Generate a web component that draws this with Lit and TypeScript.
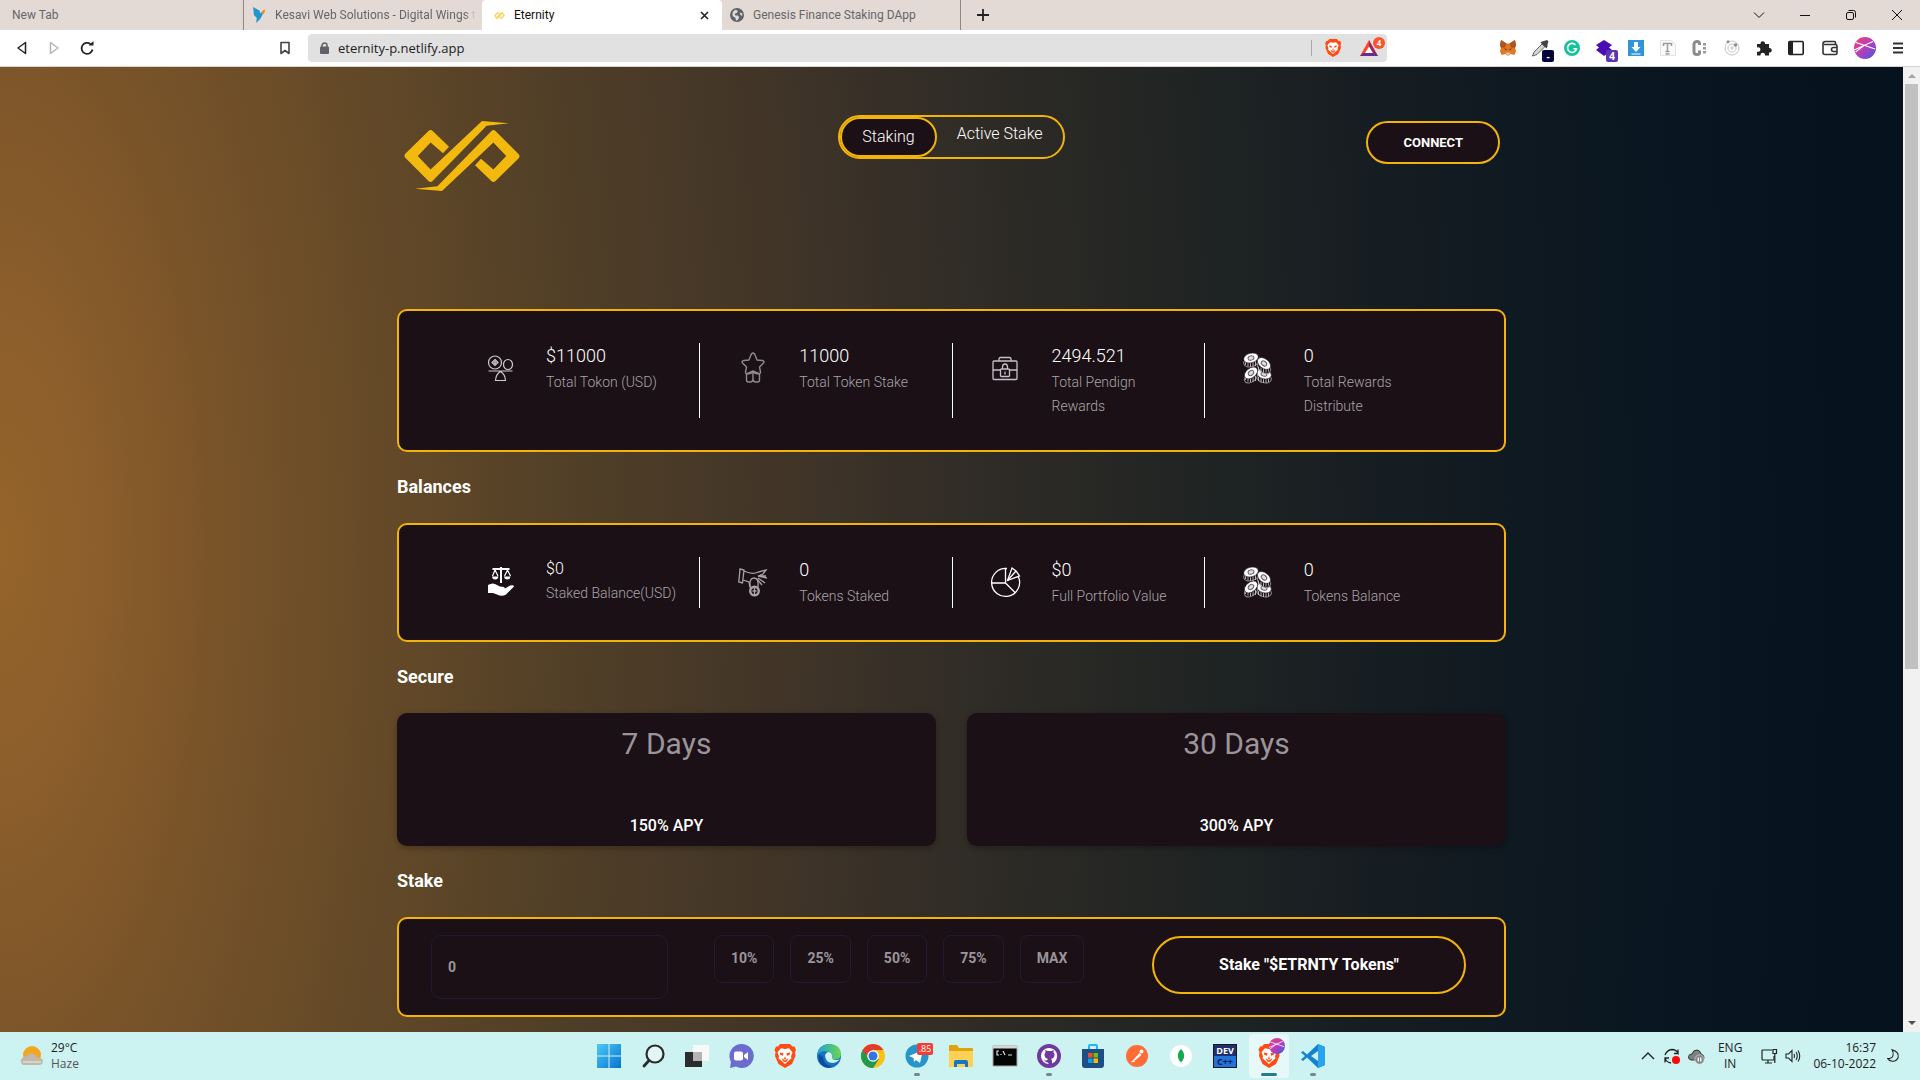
import { LitElement, html, svg, css } from "lit";
import { customElement, property } from "lit/decorators.js";

const brave = svg`
  <path d="M7 0h10l2.500 2.500h2l1.500 3.500-1 2 .5 4-3.500 8L12 24l-6.500-4L2 12l.5-4-1-2L3 2.500h2z" fill="#ff4b14"/>
  <path d="M12 5l4-.8 3.500 4-1.500 4 .5 2-4 3.500L12 20l-2.500-2.300-4-3.500.5-2-1.500-4L8 4.200z" fill="#fff"/>
  <path d="M7 8.500l3.500.8-.5 2.500-2.800-1zM17 8.500l-3.500.8.5 2.500 2.800-1zM12 12l1 3-1 .6-1-.6zM8.500 14l3.500 2.500 3.500-2.500-1.500 3.200-2 1-2-1z" fill="#ff4b14"/>`;

const coin = (x: number, y: number, r: number) => svg`
  <g transform="translate(${x} ${y})">
    <ellipse cx="0" cy="4" rx="7.500" ry="4.800" transform="rotate(${r} 0 4)" fill="#1a1015" stroke="#8d888d" stroke-width="1"/>
    <path d="M-5.500 3v4M-3 4v4.500M-.5 4v5M2 4v5M4.500 3v5" stroke="#c9c5c9" stroke-width=".9"/>
    <ellipse cx="0" cy="0" rx="7.500" ry="4.800" transform="rotate(${r})" fill="#fff" stroke="#1a1015" stroke-width=".6"/>
    <ellipse cx="0" cy="0" rx="3" ry="2.200" transform="rotate(${r})" fill="#ddd" stroke="#6a6268" stroke-width="1"/>
  </g>`;

const wing = "M28.500 60Q26.600 62 24.500 60L1.500 37Q-.5 35 1.500 32.500L24.500 10Q26.600 8 28.700 10L45 25.700 39 32.300 26.600 21.500 13.800 35 26.600 48.500 78 0 105 2.300 82.600 4.700Z";

const icons: Record<string, unknown> = {
  logo: svg`<g fill="#f3b90e"><path d=${wing}/><path transform="rotate(180 58 35)" d=${wing}/></g>`,
  bird: svg`<path d="M0 0l9 5 1 4 3-3 3 0-3 4-3 6-6 6 1-7-4-4z" fill="#2196c9"/><path d="M12 6l4-3v4l-3 4z" fill="#f58a2c"/>`,
  infinity: svg`<path d="M1 6l3-3 2 2-3 4zM11 6L8 9 6 7l3-4zM4 9l4-6" fill="none" stroke="#f8d767" stroke-width="1.600"/>`,
  close: svg`<path d="M2 2l7 7M9 2l-7 7" stroke="#222" stroke-width="1.600" fill="none"/>`,
  globe: svg`<circle cx="8" cy="8" r="8" fill="#5f6368"/><path d="M3 4.500l3-2.500 3 1-1 2.500-2.500 1 .5 2 3 0 1.500 2-1.500 3-2 1-1-3.500L3 9zM11 5l3 1v3l-2-1z" fill="#e3dad6"/>`,
  plus: svg`<path d="M6 0v12M0 6h12" stroke="#222" stroke-width="1.800"/>`,
  back: svg`<path d="M9.500 1.500v11L2 7z" fill="none" stroke="#222" stroke-width="1.500" stroke-linejoin="round"/>`,
  forward: svg`<path d="M2.500 1.500v11L10 7z" fill="none" stroke="#b5b5b5" stroke-width="1.500" stroke-linejoin="round"/>`,
  reload: svg`<path d="M12.500 8.500A5.500 5.500 0 1 1 10.500 3" fill="none" stroke="#222" stroke-width="1.800"/><path d="M8.500 4.500h5V0z" fill="#222"/>`,
  bookmark: svg`<path d="M1.500 1.500h8v11L5.500 9.500l-4 3z" fill="none" stroke="#444" stroke-width="1.600" stroke-linejoin="round"/>`,
  lock: svg`<rect x="0" y="4.500" width="9" height="7.500" rx="1" fill="#5f6368"/><path d="M2 5V3.500a2.500 2.500 0 0 1 5 0V5" fill="none" stroke="#5f6368" stroke-width="1.500"/>`,
  brave,
  bat: svg`<path d="M9 0L0 16h4.500L9 8z" fill="#ff4724"/><path d="M9 0l9 16h-4.500L9 8z" fill="#9e1f63"/><path d="M0 16h18l-3.500-3H3z" fill="#662d91"/><path d="M9 6.500L5 13h8z" fill="#fff"/>`,
  fox: svg`<path d="M1 0l5.500 3.500h3L15 0l1 5-1 3 1 3-1.500 4-4-1L9 15.500H7L5.500 14l-4 1L0 11l1-3-1-3z" fill="#e4761b"/><path d="M1 0l5.500 3.500L5 7.500 1 8 0 5zM15 0L9.500 3.500 11 7.500l4 .5 1-3z" fill="#a85522"/><path d="M4 8.500l2.500.5v1.500zM12 8.500L9.500 9v1.500z" fill="#233447"/><path d="M5.500 12.500h5L9 15.500H7z" fill="#d7c1b3"/>`,
  dropper: svg`<path d="M10 4L2 12l-1.500 4L5 14.500 13 6.500z" fill="#d5d5d5" stroke="#666" stroke-width="1"/><path d="M8.500 2.500l6 6 1-2 0-2 1-3-1.500-1.500-3 1-2 .5z" fill="#444"/>`,
  grammarly: svg`<circle cx="8" cy="8" r="8" fill="#15c39a"/><path d="M11.500 5A4.500 4.500 0 1 0 12.500 8.700H9.500" fill="none" stroke="#fff" stroke-width="1.600"/>`,
  gem: svg`<path d="M8 0l8 5-3 2.500L16 10l-8 6-8-6 3-2.500L0 5z" fill="#4a0db5"/>`,
  download: svg`<path d="M0 0h16v16H0z" fill="#2f96dd"/><path d="M6 2h4v5h2.500L8 12 3.500 7H6zM3.500 13.500h9v1h-9z" fill="#fff"/>`,
  tee: svg`<path d="M.5.5h11l4 4v11H.5z" fill="#fafafa" stroke="#e3e3e3"/><path d="M3.500 6V3.500h8V6M7.500 3.500v8M5.500 11.500h4M5.500 14h4" fill="none" stroke="#9c9c9c" stroke-width="1.500"/>`,
  cdots: svg`<path d="M7.500 5V3.500Q7.500 1.500 5 1.500T2 4v8q0 2.500 3 2.500T7.500 12v-1.500" fill="none" stroke="#8c8c8c" stroke-width="3"/><path d="M11 3h3v2.500h-3zM11 7h3v2.500h-3zM11 11h3v2.500h-3z" fill="#9a9a9a"/>`,
  orbit: svg`<circle cx="8" cy="8" r="7" fill="none" stroke="#c4c4c4"/><circle cx="8" cy="8" r="4" fill="none" stroke="#dadada" stroke-width="1.500"/><circle cx="8" cy="8" r="1.800" fill="#d2d2d2"/><circle cx="4" cy="1.800" r="1.500" fill="#8f8f8f"/><circle cx="11.500" cy="5" r="1.800" fill="#8f8f8f"/>`,
  puzzle: svg`<path d="M1 4h3.500a2.300 2.300 0 1 1 4.500 0H13v4a2.300 2.300 0 1 1 0 4.500V15.500H9a2.300 2.300 0 1 0-4.500 0H1v-4a2.300 2.300 0 1 0 0-4z" fill="#222"/>`,
  sidebar: svg`<rect x=".8" y="1.500" width="14.400" height="13" rx="1" fill="none" stroke="#222" stroke-width="1.600"/><path d="M1 2h4v12H1z" fill="#222"/>`,
  wallet: svg`<path d="M13.500 4V2.500q0-1-1-1h-9Q1 1.500 1 4v8.500q0 2 2 2h10.500q1.500 0 1.500-1.500V6q0-1.500-1.500-1.500H2" fill="none" stroke="#333" stroke-width="1.600"/><path d="M15 7.500h-3.500a2 2 0 0 0 0 4H15" fill="none" stroke="#333" stroke-width="1.600"/>`,
  avatar: svg`<defs><linearGradient id="av" x1="0" y1="0" x2="1" y2="1"><stop offset="0" stop-color="#f0446c"/><stop offset=".5" stop-color="#b93cbd"/><stop offset="1" stop-color="#3d5be0"/></linearGradient></defs><circle cx="11" cy="11" r="11" fill="url(#av)"/><path d="M2 5.500L21 12M0 13L19 4.500M1.500 15L10 8.500" stroke="#fff" stroke-width="1.100" fill="none"/>`,
  menu: svg`<path d="M0 1.500h10M0 6h10M0 10.500h10" stroke="#333" stroke-width="1.800"/>`,
  chevron: svg`<path d="M1 3.500l5 5 5-5" fill="none" stroke="#111"/>`,
  minimise: svg`<path d="M1 6.500h10" stroke="#111"/>`,
  restore: svg`<rect x="1.500" y="3.500" width="7" height="7" rx="1.500" fill="none" stroke="#111"/><path d="M3.500 1.500h5q2 0 2 2v5" fill="none" stroke="#111"/>`,
  exit: svg`<path d="M1 1l10 10M11 1L1 11" stroke="#111"/>`,

  balance: svg`<g fill="none" stroke="#cfcad0" stroke-width="1.200" transform="translate(0 -1)"><circle cx="10" cy="10.500" r="6.500"/><path d="M10 7.500l3 3-3 3-3-3z"/><circle cx="10" cy="10.500" r="1"/><ellipse cx="23" cy="12.500" rx="4.500" ry="5"/><path d="M3.500 19h24M15.500 19.500q-4.500 2.500-5 9h10q-.5-6.500-5-9z"/></g>`,
  medal: svg`<g fill="none" stroke="#8f898f" stroke-width="1.400" stroke-linejoin="round"><path d="M15 0q1.500 0 2.500 3l1.500 4 5 .5q3 .5 1.500 2.500l-4 4 1 5q0 2-2 1.500L15 18l-5.500 2.500q-2 .5-2-1.500l1-5-4-4Q3 8 6 7.500L11 7l1.500-4Q13.500 0 15 0z"/><path d="M8.500 20v7q0 2 2 2h2q2 0 2.500-2.500.5 2.500 2.500 2.500h2q2 0 2-2v-7M15 18.500v9M8.500 20.500q4 1 6.500-2 2.500 3 6.500 2"/></g>`,
  briefcase: svg`<g fill="none" stroke="#c6c1c7" stroke-width="1.300" transform="translate(0 -1)"><rect x="3" y="9" width="24" height="18.500" rx="1"/><path d="M9 9V7q0-1.500 1.500-1.500h9q1.500 0 1.500 1.500v2M3 18h7M20 18h7"/><rect x="10.500" y="17" width="9" height="7.500" rx="1"/><path d="M12.500 17v-2a2.500 3 0 0 1 5 0v2M15 19.500v3"/></g>`,
  coins: svg`${coin(22, 21, 15)}${coin(9, 20, -38)}${coin(9, 5, -15)}${coin(22, 10.500, 38)}`,
  scaleHand: svg`<g transform="translate(2 0)"><path d="M14 0v16M5.500 2h17" stroke="#fff" stroke-width="2" fill="none"/><path d="M8 3L5.500 9M8 3l3 6M20.500 3l-3 6M20.500 3l3 6" stroke="#fff" stroke-width="1.200" fill="none"/><path d="M5 9.500h6.500Q11 12.500 8.200 12.500T5 9.500zM17 9.500h6.500q-.5 3-3.300 3T17 9.500z" fill="#fff"/><path d="M1 18q5-3 9 0l3 1.500q5 0 5 2l5-3q4-1 4 1l-8 8q-4 2.500-9 0l-4-1.500-5 0z" fill="#fff"/></g>`,
  handCoin: svg`<g fill="none" stroke="#a8a3a8" stroke-width="1.300" transform="translate(0 -1)"><path d="M2 3l4 1-1.500 13L.8 16zM6 5q9 4 14 1l8-2-3 4-5 2 8 0M20 10l9 2M20 12l7 5M19 13l5 6M5 14l6 2 1 5 3 1"/><path d="M12 21q-1-9 4-9t4 9"/><circle cx="16.500" cy="25" r="4.300" stroke-width="2.400"/><path d="M16.500 22v6M14.500 25h4"/></g>`,
  pie: svg`<g fill="none" stroke="#fff" stroke-width="1.300"><path d="M17 1.500A14 14 0 1 0 28.500 10M15.500 2v14H1.500M15.500 16L25 25.500M17.500 13.500L22 1 26 4 29.500 9z"/><path d="M17.500 13.500L26 4"/></g>`,

  weather: svg`<circle cx="12" cy="11" r="9" fill="#f3a61f"/><path d="M3 21q-4-3-1-7 2-2 4-1.500Q9 8 13 10q4 1 4 4 5-1 6 3 0 4-4 4z" fill="#bfb9ae"/><path d="M3 18h18" stroke="#e5dccb" stroke-width="1.500"/>`,
  windows: svg`<defs><linearGradient id="wn" x1="0" y1="0" x2="1" y2="1"><stop offset="0" stop-color="#4cc9f8"/><stop offset="1" stop-color="#0673cf"/></linearGradient></defs><path d="M0 0h11.500v11.500H0zM12.500 0H24v11.500H12.500zM0 12.500h11.500V24H0zM12.500 12.500H24V24H12.500z" fill="url(#wn)"/>`,
  search: svg`<circle cx="14" cy="10" r="8.500" fill="#e3f6f6" stroke="#2a2a2a" stroke-width="2.200"/><path d="M8 16.500L3 22" stroke="#2a2a2a" stroke-width="2.800" stroke-linecap="round"/>`,
  tasks: svg`<path d="M8 1h16v16H8z" fill="#f7f9f9"/><path d="M0 8h17v15H0z" fill="#2c2c2c"/><path d="M8 8h9v9H8z" fill="#b4b4b4"/>`,
  chat: svg`<path d="M12 0a12 12 0 1 1-5 22.500L1 24l1-6A12 12 0 0 1 12 0z" fill="#6c6bd0"/><rect x="5" y="7.500" width="9" height="9" rx="2" fill="#fff"/><path d="M15 11l4-3v8l-4-3z" fill="#fff"/>`,
  edge: svg`<defs><linearGradient id="eg" x1="0" y1="0" x2="1" y2="0"><stop offset="0" stop-color="#1f9fd8"/><stop offset="1" stop-color="#6bd84c"/></linearGradient></defs><circle cx="12" cy="12" r="12" fill="#1670c4"/><path d="M0 11Q2 0 13 0q11 1 11 10 0 5-6 5.500-4-.5-3-2 1-3-2-5Q5 5 0 11z" fill="url(#eg)"/><path d="M8 11q2-4 5-2.500 3 2 2 5 0 2 4 2.500 3 0 4-1-3 4-8 4-7-1-7-8z" fill="#cdf2f2"/><path d="M6 13q0 8 9 9.500Q11 25 6 22 0 18 2 11q2 0 4 2z" fill="#0c4d9a"/>`,
  chrome: svg`<circle cx="12" cy="12" r="12" fill="#fbc116"/><path d="M1.600 6A12 12 0 0 1 22.400 6H12l-6 8z" fill="#e33b2e"/><path d="M1.600 6A12 12 0 0 0 12 24l6-9-9 1z" fill="#229a4b"/><circle cx="12" cy="12" r="5.800" fill="#fff"/><circle cx="12" cy="12" r="4.500" fill="#2f74e8"/>`,
  telegram: svg`<circle cx="12" cy="12" r="11.500" fill="#2495cd"/><path d="M4 12l14-6-3 13-4-3-2 2-.5-4z" fill="#fff"/>`,
  folder: svg`<path d="M0 2q0-1 1-1h7l2 3h13q1 0 1 1v17q0 1-1 1H1q-1 0-1-1z" fill="#e0a30c"/><path d="M0 7h24v15q0 1-1 1H1q-1 0-1-1z" fill="#fdd155"/><path d="M5 23v-5q0-2 2-2h10q2 0 2 2v5h-3v-3H8v3z" fill="#1676c8"/>`,
  terminal: svg`<path d="M0 2h24v20H0z" fill="#050505" stroke="#a5a5a5"/><path d="M0 2h24v2.500H0z" fill="#d6d6d6"/><path d="M6 7H4v4h2M8 8v0M8 10v1M10 7l2 4M15 11h4" stroke="#ddd" fill="none" stroke-width="1.200"/>`,
  github: svg`<circle cx="12" cy="12" r="12" fill="#6e3a9e"/><path d="M12 20a8 8 0 1 1 0-16 8 8 0 0 1 3 15.500V17q0-1.500-1-2 4-1 3.500-5l-1-1.500.2-2.500-2.200 1h-4L8.300 6l.2 2.500L7.500 10q-.5 4 3.500 5-1 .5-1 1.500-2 .5-3-1.500 1 4 3 3z" fill="#fff"/>`,
  store: svg`<path d="M8 6V2q0-1 1-1h6q1 0 1 1v4" fill="none" stroke="#2bb3ef" stroke-width="2"/><path d="M1 5h22v16q0 3-3 3H4q-3 0-3-3z" fill="#1b4f86"/><path d="M7 9h4.500v4.500H7z" fill="#f25022"/><path d="M12.500 9H17v4.500h-4.500z" fill="#7fba00"/><path d="M7 14.500h4.500V19H7z" fill="#00a4ef"/><path d="M12.500 14.500H17V19h-4.500z" fill="#ffb900"/>`,
  postman: svg`<circle cx="12" cy="12" r="11" fill="#ff6c37"/><path d="M6.500 18l8-9 2 2-6 5z" fill="#fff"/><circle cx="16.500" cy="7.500" r="2" fill="#fff"/><path d="M6 18l4-1" stroke="#fff"/>`,
  mongo: svg`<circle cx="12" cy="12" r="11" fill="#fff"/><path d="M12 5q4 4 3 8.500-.5 2.500-3 5-2.500-2.500-3-5Q8 9 12 5z" fill="#13aa52"/>`,
  devcpp: svg`<rect x=".5" y=".5" width="23" height="23" fill="#20306f" stroke="#15161f"/><path d="M1 12h22v11H1z" fill="#2273d8"/>`,
  vscode: svg`<path d="M17 0l7 3v18l-7 3L6 13.500 2 17l-2-1.500 4-3.500-4-3.500L2 7l4 3.500z" fill="#1482cf"/><path d="M17 7v10l-7-5z" fill="#cdf2f2"/><path d="M17 0l7 3v18l-7 3z" fill="#2ca3ee"/>`,
  up: svg`<path d="M2 11l6-6 6 6" fill="none" stroke="#222" stroke-width="1.400"/>`,
  sync: svg`<path d="M1 7q2-5 7-5.500 4 0 6 3.500V1.500M14 5.500h-4M7 15q-4-.5-6-4.500M1 14.500V10h4" fill="none" stroke="#222" stroke-width="1.300"/><circle cx="12" cy="12" r="4" fill="#f60a0a"/>`,
  cloud: svg`<path d="M3 12q-3-1-2.500-3.500Q1 6 4 6q1-4 5-4 3 0 4 4 3 1 3 3.500T14 12z" fill="#808080" stroke="#333"/><circle cx="11.500" cy="11.500" r="4.700" fill="#858585" stroke="#cdf2f2" stroke-width=".6"/><path d="M10.300 9.500v4M12.800 9.500v4" stroke="#fff" stroke-width="1.300"/>`,
  network: svg`<path d="M11 2H2q-1 0-1 1v8q0 1 1 1h11V8M7 12v3M4 15h7" fill="none" stroke="#222" stroke-width="1.200"/><path d="M12 1.500h3.500v4H12zM13.800 5.500V15" fill="none" stroke="#222" stroke-width="1.200"/>`,
  volume: svg`<path d="M1 6h2.500L7 2.500v11L3.500 10H1zM9 6q1 2 0 4M11 4q2.500 4 0 8M13 2.500q3.500 5.500 0 11" fill="none" stroke="#222" stroke-width="1.100"/>`,
  moon: svg`<path d="M6 1q8 2 7 8.500-2 5-7 4.500-3.500-.5-5-3 5 0 6-3.500T6 1z" fill="none" stroke="#222" stroke-width="1.200"/>`,
};

@customElement("ui-icon")
export class UiIcon extends LitElement {
  @property() name = "";
  @property() box = "0 0 24 24";
  static styles = css`
    :host { display: inline-block; flex: none; line-height: 0; }
    .art { display: block; width: 100%; height: 100%; overflow: visible; }
  `;
  render() {
    return html`<svg class="art" viewBox=${this.box} aria-hidden="true">${icons[this.name]}</svg>`;
  }
}

@customElement("browser-chrome")
export class BrowserChrome extends LitElement {
  static styles = css`
    :host { display: block; font: 12px/16px "Open Sans", "Noto Sans", sans-serif; color: #222; }
    button { border: 0; padding: 0; background: none; font: inherit; color: inherit; display: flex; align-items: center; justify-content: center; }
    .strip { display: flex; height: 30px; background: #e3dad6; align-items: stretch; font-family: Roboto, "Open Sans", sans-serif; }
    .tab { width: 240px; height: 30px; padding: 0 12px; gap: 9px; justify-content: flex-start; color: #666; box-sizing: border-box; }
    .label { white-space: nowrap; text-align: left; }
    .fade { -webkit-mask-image: linear-gradient(90deg, #000 94%, transparent); mask-image: linear-gradient(90deg, #000 94%, transparent); }
    .first { width: 243px; }
    .second { width: 239px; padding: 0 0 0 7px; gap: 8px; border-left: 1px solid #8c8684; }
    .active { background: #fff; color: #111; border-radius: 4px 4px 0 0; display: flex; align-items: center; }
    .active .label { flex: 1; }
    .last { width: 239px; padding-left: 8px; border-right: 1px solid #8c8684; }
    .new { width: 44px; }
    .windowing { display: flex; margin-left: auto; }
    .windowing button { width: 46px; }
    .bar { display: flex; align-items: center; height: 36px; background: #fff; border-bottom: 1px solid #ddd2cb; padding: 0 16px; }
    .nav { display: flex; gap: 20px; width: 263px; align-items: center; }
    .address { display: flex; align-items: center; height: 28px; flex: 0 1 1079px; margin-left: 17px; background: #e1e1e1; border-radius: 4px; box-sizing: border-box; padding: 0 9px 0 12px; gap: 9px; }
    .url { flex: 1; min-width: 0; border: 0; background: none; outline: 0; padding: 0; font: 13px/20px "Open Sans", "Noto Sans", sans-serif; color: #222; }
    .shields { display: flex; align-items: center; border-left: 1px solid #a9a9a9; padding-left: 12px; gap: 18px; height: 16px; }
    .badged { position: relative; }
    .count { position: absolute; background: #fb542b; color: #fff; border-radius: 6px; width: 12px; height: 12px; font: 700 8px/12px "Open Sans", sans-serif; text-align: center; left: 13px; top: -3px; }
    .square { border-radius: 2px; background: #5e35b1; left: 10px; top: 10px; font-size: 10px; }
    .dark { background: #06033a; }
    .extensions { display: flex; align-items: center; gap: 16px; margin-left: auto; }
    .account { display: flex; align-items: center; gap: 16px; padding-left: 2px; }
    .s16 { width: 16px; height: 16px; }
    .s12 { width: 12px; height: 12px; }
    .s11 { width: 11px; height: 11px; }
    .s14 { width: 14px; height: 14px; }
    .nav-icon { width: 12px; height: 14px; }
    .lock { width: 9px; height: 12px; }
    .s18 { width: 18px; height: 18px; }
    .bat { width: 18px; height: 16px; }
    .face { width: 22px; height: 22px; }
  `;
  render() {
    const ext = (name: string, label: string) => html`<button aria-label=${label}><ui-icon class="s16" name=${name} box="0 0 16 16"></ui-icon></button>`;
    return html`
      <div class="strip">
        <button class="tab first"><span class="label">New Tab</span></button>
        <button class="tab second"><ui-icon class="s16" name="bird" box="0 0 16 22"></ui-icon><span class="label fade">Kesavi Web Solutions - Digital Wings t</span></button>
        <div class="tab active"><ui-icon class="s11" name="infinity" box="0 0 12 12"></ui-icon><span class="label">Eternity</span><button aria-label="Close tab"><ui-icon class="s11" name="close" box="0 0 11 11"></ui-icon></button></div>
        <button class="tab last"><ui-icon class="s14" name="globe" box="0 0 16 16"></ui-icon><span class="label">Genesis Finance Staking DApp</span></button>
        <button class="new" aria-label="New tab"><ui-icon class="s12" name="plus" box="0 0 12 12"></ui-icon></button>
        <div class="windowing">
          ${[["chevron", "Search tabs"], ["minimise", "Minimise"], ["restore", "Restore"], ["exit", "Close"]].map(
            ([n, l]) => html`<button aria-label=${l}><ui-icon class="s12" name=${n} box="0 0 12 12"></ui-icon></button>`)}
        </div>
      </div>
      <div class="bar">
        <div class="nav">
          <button aria-label="Back"><ui-icon class="nav-icon" name="back" box="0 0 12 14"></ui-icon></button>
          <button aria-label="Forward"><ui-icon class="nav-icon" name="forward" box="0 0 12 14"></ui-icon></button>
          <button aria-label="Reload"><ui-icon class="s14" name="reload" box="0 0 14 14"></ui-icon></button>
        </div>
        <button aria-label="Bookmark"><ui-icon class="nav-icon" name="bookmark" box="0 0 11 14"></ui-icon></button>
        <div class="address">
          <ui-icon class="lock" name="lock" box="0 0 9 12"></ui-icon>
          <input class="url" aria-label="Address" .value=${"eternity-p.netlify.app"} />
          <div class="shields">
            <button aria-label="Shields"><ui-icon class="s18" name="brave"></ui-icon></button>
            <button class="badged" aria-label="Rewards"><ui-icon class="bat" name="bat" box="0 0 18 16"></ui-icon><span class="count">4</span></button>
          </div>
        </div>
        <div class="extensions">
          ${ext("fox", "Wallet extension")}
          <button class="badged" aria-label="Colour picker"><ui-icon class="s16" name="dropper" box="0 0 16 16"></ui-icon><span class="count square dark">-</span></button>
          ${ext("grammarly", "Grammar")}
          <button class="badged" aria-label="Layers"><ui-icon class="s16" name="gem" box="0 0 16 16"></ui-icon><span class="count square">4</span></button>
          ${ext("download", "Downloads")}${ext("tee", "Text")}${ext("cdots", "Code")}${ext("orbit", "Orbit")}${ext("puzzle", "Extensions")}${ext("sidebar", "Sidebar")}
          <div class="account">
            ${ext("wallet", "Wallet")}
            <button aria-label="Profile"><ui-icon class="face" name="avatar" box="0 0 22 22"></ui-icon></button>
            <button aria-label="Menu"><ui-icon class="s12" name="menu" box="0 0 10 12"></ui-icon></button>
          </div>
        </div>
      </div>`;
  }
}

interface Stat { icon: string; value: string; label: string; small?: boolean }

const totals: Stat[] = [
  { icon: "balance", value: "$11000", label: "Total Tokon (USD)" },
  { icon: "medal", value: "11000", label: "Total Token Stake" },
  { icon: "briefcase", value: "2494.521", label: "Total Pendign Rewards" },
  { icon: "coins", value: "0", label: "Total Rewards Distribute" },
];

const balances: Stat[] = [
  { icon: "scaleHand", value: "$0", label: "Staked Balance(USD)", small: true },
  { icon: "handCoin", value: "0", label: "Tokens Staked" },
  { icon: "pie", value: "$0", label: "Full Portfolio Value" },
  { icon: "coins", value: "0", label: "Tokens Balance" },
];

@customElement("stat-card")
export class StatCard extends LitElement {
  @property({ attribute: false }) stats: Stat[] = [];
  static styles = css`
    :host { display: block; box-sizing: border-box; border: 2px solid #f3b409; border-radius: 10px; background: #1a1015; padding: 32px 48px; }
    .grid { display: grid; grid-template-columns: repeat(4, 1fr); }
    .stat { display: flex; padding-left: 6px; padding-right: 16px; }
    .stat + .stat { border-left: 1px solid #fff; }
    .symbol { width: 93px; height: 50px; flex: none; display: flex; align-items: center; justify-content: center; }
    .glyph { width: 30px; height: 30px; }
    .value { margin: 0 0 2px; font-size: 18px; line-height: 25px; color: #fff; font-weight: 300; }
    .small { margin: 0; font-size: 16px; line-height: 24px; }
    .label { margin: 0; font-size: 14px; line-height: 24px; color: #aaa5aa; font-weight: 300; }
  `;
  render() {
    return html`<div class="grid">${this.stats.map((s) => html`
      <div class="stat">
        <div class="symbol"><ui-icon class="glyph" name=${s.icon} box="0 0 30 30"></ui-icon></div>
        <div><p class="value ${s.small ? "small" : ""}">${s.value}</p><p class="label">${s.label}</p></div>
      </div>`)}</div>`;
  }
}

@customElement("staking-page")
export class StakingPage extends LitElement {
  static styles = css`
    :host {
      display: flex; flex: 1; font-family: Roboto, "Liberation Sans", sans-serif; color: #fff;
      background: radial-gradient(ellipse 1903px 4800px at 0 480px, #95642b 0%, #8c5e2b 5%, #7a5429 11%, #654a28 20%, #513f27 30%, #403428 42%, #322d27 50%, #282825 57%, #1e2323 65%, #161d22 73%, #0f1921 80%, #091621 88%, #06131e 97%);
    }
    button { font-family: inherit; color: inherit; cursor: pointer; }
    .scroll { flex: 1; min-width: 0; padding: 0 24px 15px; }
    .container { max-width: 1109px; margin: 0 auto; }
    .header { display: grid; grid-template-columns: 1fr auto 1fr; align-items: start; padding-top: 48px; height: 194px; }
    .brand { display: block; padding: 6px 7px; }
    .logo { width: 116px; height: 70px; }
    .switch { display: flex; align-items: flex-start; height: 44px; box-sizing: border-box; border: 2px solid #f3b409; border-radius: 22px; }
    .option { border: 0; border-radius: 20px; background: none; font-size: 16px; line-height: 24px; font-weight: 300; padding: 5px 20px 11px; }
    .chosen { background: #1a1015; border: 2px solid #f3b409; padding: 6px 20px; }
    .connect { justify-self: end; margin: 6px; height: 43px; border: 2px solid #f3b409; border-radius: 22px; background: #1a1015; padding: 0 35px; font-size: 13px; font-weight: 700; }
    .heading { margin: 21px 0 23px; font-size: 18px; line-height: 27px; font-weight: 700; }
    .plans { display: grid; grid-template-columns: 1fr 1fr; gap: 31px; }
    .plan { display: flex; flex-direction: column; align-items: center; justify-content: space-between; height: 133px; border: 0; border-radius: 10px; background: #1a1015; padding: 8px 16px; box-shadow: 0 2px 6px #0004; }
    .term { font-size: 30px; line-height: 46px; color: #9b959b; font-weight: 400; }
    .apy { font-size: 16px; line-height: 24px; font-weight: 500; }
    .stake { display: grid; grid-template-columns: 283fr 438fr 320fr; border: 2px solid #f3b409; border-radius: 10px; background: #1a1015; padding: 16px 32px; align-items: start; }
    .amount { display: block; width: calc(100% - 46px); height: 64px; box-sizing: border-box; border: 1px solid #221b2f; border-radius: 10px; background: none; color: #9b959b; font: 700 14px/20px Roboto, sans-serif; padding: 0 16px; outline: 0; }
    .shares { display: flex; gap: 16px; }
    .share { height: 48px; border: 1px solid #221b2f; border-radius: 8px; background: none; padding: 0 16px 2px; font-size: 14px; font-weight: 700; color: #9b959b; }
    .submit { height: 58px; margin: 1px 6px 0 0; border: 2px solid #f3b409; border-radius: 29px; background: none; padding-bottom: 2px; font-size: 16px; font-weight: 700; }
    .track { width: 17px; flex: none; background: #f1f1f1; display: flex; flex-direction: column; align-items: center; padding: 7px 0; box-sizing: border-box; }
    .thumb { width: 13px; height: 585px; margin-top: 6px; background: #c1c1c1; }
    .tip { width: 0; height: 0; border: 4px solid transparent; border-top: 0; border-bottom-color: #a3a3a3; }
    .down { margin-top: auto; border: 4px solid transparent; border-bottom: 0; border-top-color: #505050; }
  `;
  render() {
    return html`
      <main class="scroll">
        <div class="container">
          <header class="header">
            <a class="brand" href="#" aria-label="Eternity"><ui-icon class="logo" name="logo" box="0 0 116 70"></ui-icon></a>
            <nav class="switch"><button class="option chosen">Staking</button><button class="option">Active Stake</button></nav>
            <button class="connect">CONNECT</button>
          </header>
          <stat-card .stats=${totals}></stat-card>
          <h2 class="heading">Balances</h2>
          <stat-card .stats=${balances}></stat-card>
          <h2 class="heading">Secure</h2>
          <div class="plans">
            <button class="plan"><span class="term">7 Days</span><span class="apy">150% APY</span></button>
            <button class="plan"><span class="term">30 Days</span><span class="apy">300% APY</span></button>
          </div>
          <h2 class="heading">Stake</h2>
          <form class="stake" @submit=${(e: Event) => e.preventDefault()}>
            <input class="amount" aria-label="Stake amount" inputmode="decimal" .value=${"0"} />
            <div class="shares">${["10%", "25%", "50%", "75%", "MAX"].map((s) => html`<button type="button" class="share">${s}</button>`)}</div>
            <button class="submit">Stake "$ETRNTY Tokens"</button>
          </form>
        </div>
      </main>
      <div class="track"><span class="tip"></span><span class="thumb"></span><span class="tip down"></span></div>`;
  }
}

@customElement("task-bar")
export class TaskBar extends LitElement {
  static styles = css`
    :host { display: grid; grid-template-columns: 1fr auto 1fr; height: 48px; background: #cdf2f2; font: 12px/16px "Open Sans", "Noto Sans", sans-serif; color: #1c1c1c; }
    button { border: 0; padding: 0; background: none; font: inherit; color: inherit; display: flex; align-items: center; }
    .weather { padding-left: 20px; gap: 7px; text-align: left; justify-self: start; }
    .text { display: block; }
    .muted { color: #555; }
    .apps { display: flex; align-items: center; padding-left: 2px; }
    .app { position: relative; width: 44px; height: 44px; justify-content: center; }
    .big { width: 24px; height: 24px; }
    .current { background: #e6f8f8; border-radius: 4px; width: 40px; margin: 0 2px; }
    .dot { position: absolute; left: 50%; bottom: 2px; width: 6px; height: 3px; margin-left: -3px; border-radius: 2px; background: #74888a; }
    .current .dot { width: 16px; margin-left: -8px; background: #1f7e91; }
    .badge { position: absolute; left: 22px; top: 9px; width: 16px; height: 12px; border-radius: 2px; background: #f23c34; color: #fff; font: 9px/12px "Open Sans", sans-serif; text-align: center; }
    .person { position: absolute; left: 20px; top: 4px; width: 16px; height: 16px; }
    .dev { position: absolute; left: 0; right: 0; top: 11px; text-align: center; color: #fff; font: 700 9px/11px "Open Sans", sans-serif; }
    .cpp { display: block; color: #0b1850; }
    .tray { display: flex; align-items: center; justify-self: end; padding-right: 20px; }
    .s16 { width: 16px; height: 16px; }
    .s14 { width: 14px; height: 14px; }
    .icons { display: flex; gap: 8px; }
    .lang { margin: 0 19px 0 14px; text-align: center; }
    .lang, .clock { display: block; }
    .clock { text-align: right; margin: 0 10px 0 12px; }
  `;
  render() {
    const apps = ["windows", "search", "tasks", "chat", "brave", "edge", "chrome", "telegram", "folder", "terminal", "github", "store", "postman", "mongo", "devcpp", "brave-current", "vscode"];
    const running = new Set(["telegram", "github", "brave-current", "vscode"]);
    return html`
      <button class="weather"><ui-icon class="big" name="weather"></ui-icon><span><span class="text">29°C</span><span class="text muted">Haze</span></span></button>
      <div class="apps">${apps.map((a) => html`
        <button class="app ${a === "brave-current" ? "current" : ""}" aria-label=${a}>
          <ui-icon class="big" name=${a.replace("-current", "")}></ui-icon>
          ${a === "telegram" ? html`<span class="badge">.85</span>` : ""}
          ${a === "devcpp" ? html`<span class="dev">DEV<span class="cpp">C++</span></span>` : ""}
          ${a === "brave-current" ? html`<ui-icon class="person" name="avatar" box="0 0 22 22"></ui-icon>` : ""}
          ${running.has(a) ? html`<span class="dot"></span>` : ""}
        </button>`)}</div>
      <div class="tray">
        <div class="icons">${["up", "sync", "cloud"].map((n) => html`<button aria-label=${n}><ui-icon class="s16" name=${n} box="0 0 16 16"></ui-icon></button>`)}</div>
        <button class="lang"><span class="text">ENG</span><span class="text">IN</span></button>
        <div class="icons">${["network", "volume"].map((n) => html`<button aria-label=${n}><ui-icon class="s16" name=${n} box="0 0 16 16"></ui-icon></button>`)}</div>
        <button class="clock"><span class="text">16:37</span><span class="text">06-10-2022</span></button>
        <button aria-label="Focus"><ui-icon class="s14" name="moon" box="0 0 14 16"></ui-icon></button>
      </div>`;
  }
}

@customElement("app-root")
export class AppRoot extends LitElement {
  static styles = css`:host { display: flex; flex-direction: column; min-height: 100vh; }`;
  render() {
    return html`<browser-chrome></browser-chrome><staking-page></staking-page><task-bar></task-bar>`;
  }
}
